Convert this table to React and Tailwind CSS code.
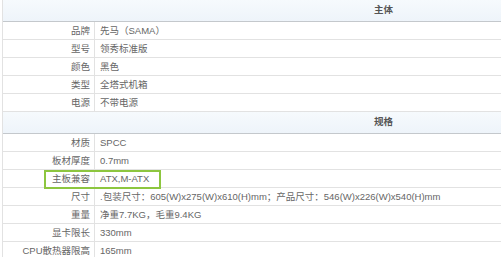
import React from 'react';

const main = [
  ['品牌', '先马（SAMA）'],
  ['型号', '领秀标准版'],
  ['颜色', '黑色'],
  ['类型', '全塔式机箱'],
  ['电源', '不带电源'],
];

const spec = [
  ['材质', 'SPCC'],
  ['板材厚度', '0.7mm'],
  ['主板兼容', 'ATX,M-ATX'],
  ['尺寸', '.包装尺寸：605(W)x275(W)x610(H)mm；产品尺寸：546(W)x226(W)x540(H)mm'],
  ['重量', '净重7.7KG，毛重9.4KG'],
  ['显卡限长', '330mm'],
  ['CPU散热器限高', '165mm'],
];

const Head = ({ title }) => (
  <div className="h-[22px] flex items-center justify-center border-b border-[#c4c8cc] bg-gradient-to-b from-[#f6fafd] to-[#eef4fa] font-bold text-[#555] text-[9.5px]">
    {title}
  </div>
);

const Row = ({ label, value }) => (
  <div className="h-[18px] flex border-b border-[#e2e2e2] bg-white">
    <div className="w-[92px] shrink-0 border-r border-[#e2e2e2] text-right pr-[4px] leading-[17px]">{label}</div>
    <div className="pl-[5px] leading-[17px] whitespace-nowrap">{value}</div>
  </div>
);

export default function App() {
  return (
    <div className="relative w-[501px] h-[257px] overflow-hidden bg-white text-[#666] text-[9.5px]"
      style={{ fontFamily: '"Liberation Sans", "Noto Sans CJK SC", sans-serif' }}>
      <div className="ml-[2px] w-[762px] border-l border-[#e2e2e2]">
        <Head title="主体" />
        {main.map(([l, v]) => <Row key={l} label={l} value={v} />)}
        <Head title="规格" />
        {spec.map(([l, v]) => <Row key={l} label={l} value={v} />)}
      </div>
      <div className="absolute left-[44px] top-[170px] w-[117px] h-[19px] border-2 border-[#8dc63f]" />
    </div>
  );
}
